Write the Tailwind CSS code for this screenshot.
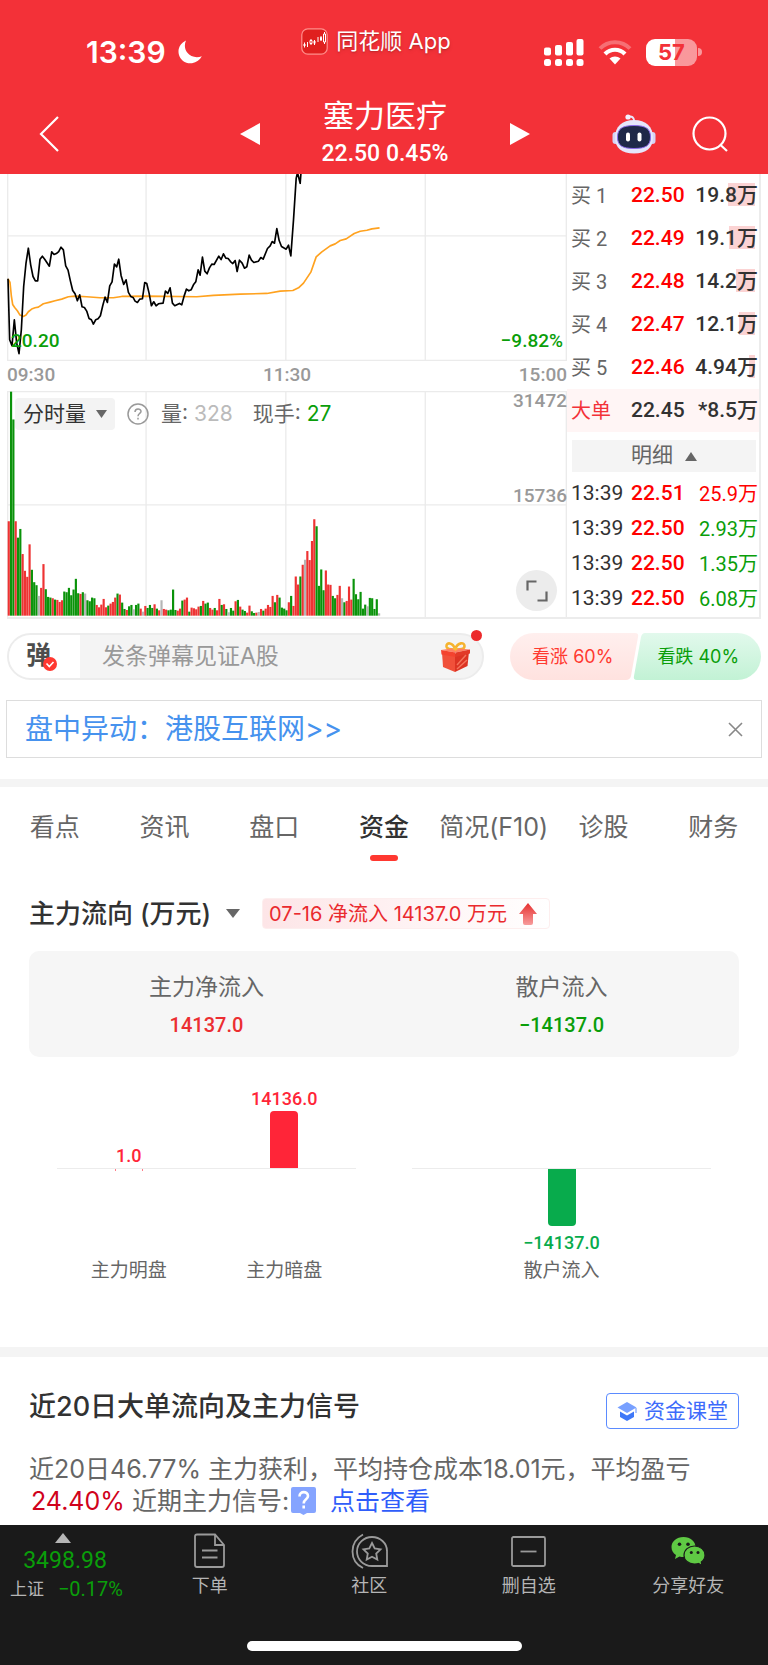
<!DOCTYPE html>
<html lang="zh-CN">
<head>
  <meta charset="UTF-8">
  <meta name="viewport" content="width=device-width, initial-scale=1.0">
  <title>塞力医疗 - 同花顺</title>
  <script src="https://cdn.jsdelivr.net/npm/@tailwindcss/browser@4"></script>
  <style>
    body { font-family: 'Inter', 'Noto Sans CJK SC', sans-serif; }
    .num { font-family: 'Roboto', 'Noto Sans CJK SC', sans-serif; }
    .sans { font-family: 'Inter', 'Noto Sans CJK SC', sans-serif; }
  </style>
</head>
<body class="bg-white text-[#323232] min-h-screen flex flex-col">
  <!-- Header -->
  <header class="bg-[#f33138] text-white pt-6">
    <div class="grid grid-cols-3 h-14">
      <div class="flex items-center gap-3 pl-[86px] text-[30px] leading-none font-semibold">
        <span>13:39</span>
        <svg class="w-6 h-6" viewBox="0 0 24 24" fill="#fff"><path d="M8 0.5C2.500 3 -0.500 8.500 0.800 14.200C2.200 20.300 8 24 14 23.200C18.500 22.600 22 20 23.800 16.300C18.500 18.300 12.500 17 9.200 12.600C6.500 9 6.200 4.500 8 0.500Z"/></svg>
      </div>
      <div class="flex items-center justify-center gap-2 h-[34px] text-[22px] leading-none pr-4">
        <svg class="w-[27px] h-[27px]" viewBox="0 0 27 27">
          <rect x="0.800" y="0.800" width="25.400" height="25.400" rx="6" fill="#e0201f" stroke="#ff8f8c" stroke-width="1.200"/>
          <g stroke="#fff" stroke-width="1" fill="none">
            <path d="M3.500 14.500v5M6.500 14v5M10 11v6M13.500 12v5M17 9v5M20 8v5M23.500 4v12"/>
            <path d="M3 16h1v2h-1zM13 13h1v2.500h-1zM19.500 9.500h1v2.500h-1z" fill="#fff"/>
            <path d="M22.500 6h2v8h-2zM9 12.500h2v3h-2z" fill="#e0201f"/>
          </g>
        </svg>
        <span class="whitespace-nowrap text-shadow-md">同花顺 App</span>
      </div>
      <div class="flex items-center justify-end gap-[14px] pr-[66px]">
        <svg class="w-10 h-[27px]" viewBox="0 0 40 27" fill="#fff">
          <rect x="0" y="8.500" width="7" height="8" rx="2"/><rect x="11" y="6" width="7" height="10.500" rx="2"/><rect x="22" y="3" width="7" height="13.500" rx="2"/><rect x="32.500" y="0" width="7" height="16.500" rx="2"/>
          <rect x="0" y="20" width="7" height="7" rx="2.500"/><rect x="11" y="20" width="7" height="7" rx="2.500"/><rect x="22" y="20" width="7" height="7" rx="2.500"/><rect x="32.500" y="20" width="7" height="7" rx="2.500"/>
        </svg>
        <svg class="w-[34px] h-[26px]" viewBox="0 0 34 26">
          <path d="M2 9.500C10 1 24 1 32 9.500" fill="none" stroke="#fff" stroke-opacity=".3" stroke-width="4"/>
          <path d="M7 15C12.500 9.300 21.500 9.300 27 15" fill="none" stroke="#fff" stroke-width="4.200"/>
          <path d="M11.500 19.500C14.500 16.800 19.500 16.800 22.500 19.500L17 25.500Z" fill="#fff"/>
        </svg>
        <div class="flex items-center gap-px">
          <span class="w-[51px] h-[27px] rounded-[9px] bg-linear-to-r from-white from-57% to-white/50 to-57% text-[#f33138] text-[22px] leading-[27px] font-bold text-center">57</span>
          <span class="w-1 h-2 rounded-r-full bg-white/50"></span>
        </div>
      </div>
    </div>
    <nav class="grid grid-cols-[1fr_292px_1fr] items-center pt-4 pb-[2px]">
      <a href="#" aria-label="返回" class="pl-[39px]">
        <svg class="w-5 h-9" viewBox="0 0 20 36" fill="none" stroke="#fff" stroke-width="2.200"><path d="M19 1L2 18L19 35"/></svg>
      </a>
      <div class="flex items-center justify-between pl-[2px]">
        <button type="button" aria-label="上一只"><svg class="w-5 h-[22px]" viewBox="0 0 20 22" fill="#fff"><path d="M20 0V22L0 11Z"/></svg></button>
        <div class="text-center">
          <h1 class="text-[31px] leading-10">塞力医疗</h1>
          <p class="num text-[23px] leading-9 font-medium">22.50 0.45%</p>
        </div>
        <button type="button" aria-label="下一只"><svg class="w-5 h-[22px]" viewBox="0 0 20 22" fill="#fff"><path d="M0 0V22L20 11Z"/></svg></button>
      </div>
      <div class="flex items-center justify-end gap-9 pr-10">
        <button type="button" aria-label="智能助手">
          <svg class="w-11 h-10" viewBox="0 0 44 40">
            <path d="M15 3C20 1.500 22 3 22.500 8" fill="none" stroke="#e9e6fa" stroke-width="2"/>
            <circle cx="16" cy="3" r="2.600" fill="#f3f1ff"/>
            <rect x="0.500" y="18" width="6" height="12" rx="3" fill="#d5d3f5"/><rect x="37.500" y="18" width="6" height="12" rx="3" fill="#d5d3f5"/>
            <path d="M22 6C34 6 41 13 41 23.500C41 34 34 39.500 22 39.500C10 39.500 3 34 3 23.500C3 13 10 6 22 6Z" fill="#e6e6fb"/>
            <path d="M22 11.500C34 11.500 38.500 15 38.500 23C38.500 31.500 34 34.500 22 34.500C10 34.500 5.500 31.500 5.500 23C5.500 15 10 11.500 22 11.500Z" fill="#1f2848" stroke="#8b6bea" stroke-width="1"/>
            <rect x="14" y="18.500" width="4" height="9" rx="2" fill="#fff"/><rect x="25.500" y="18.500" width="4" height="9" rx="2" fill="#fff"/>
          </svg>
        </button>
        <button type="button" aria-label="搜索">
          <svg class="w-9 h-9" viewBox="0 0 36 36" fill="none" stroke="#fff" stroke-width="2.200"><circle cx="17.500" cy="17.500" r="16"/><path d="M28 28.500L35 35"/></svg>
        </button>
      </div>
    </nav>
  </header>

  <main class="flex-1">
    <!-- Charts and order book -->
    <section class="flex mx-[7px] border-b-2 border-[#ececec]">
      <div class="flex-1 min-w-0 num text-[19px] text-[#999]">
        <div class="relative">
          <svg class="block w-full h-[187px]" viewBox="21 12 1679 562" preserveAspectRatio="none" fill="none">
            <g stroke="#ebebeb" stroke-width="4">
              <path d="M23 12V574M438 12V574M857 12V574M1275 12V574M1698 12V574M21 198H1700M21 572H1700"/>
            </g>
            <path stroke="#ffa21f" stroke-width="5" stroke-linejoin="round" d="M24 327L30 338L34 378L38 404L44 413L52 423L60 436L70 440L78 436L85 426L95 418L105 414L115 412L130 402L150 397L165 393L185 388L205 381L225 379L260 381L300 384L340 384L365 380L440 379L590 381L640 377L720 373L800 371L840 364L878 362L895 354L910 340L932 307L948 261L965 246L990 228L1005 222L1020 212L1038 207L1062 191L1080 184L1100 181L1115 177L1138 174"/>
            <path stroke="#000" stroke-width="5" stroke-linejoin="round" d="M24 327L29 510L36 528L43 450L50 520L57 552L64 480L71 350L78 280L85 235L92 285L99 320L106 333L113 333L120 268L127 259L134 268L148 289L155 246L162 254L169 251L176 245L183 232L190 240L197 288L204 301L211 333L218 362L225 372L232 393L239 375L246 411L253 413L260 424L267 446L274 450L280 463L287 450L294 447L301 438L308 408L315 382L322 398L329 348L336 336L343 283L350 291L356 268L363 317L371 344L378 330L385 368L392 380L399 383L405 394L412 398L419 388L427 387L434 338L440 341L447 370L454 408L461 396L468 408L475 402L489 400L496 364L503 371L510 354L517 400L524 408L538 401L545 405L552 379L559 358L566 363L573 360L580 345L587 336L594 300L600 316L607 262L614 304L621 312L628 294L635 283L642 284L656 259L663 269L670 252L677 265L684 266L691 275L698 281L705 272L711 305L718 271L726 280L733 295L740 291L747 256L754 271L761 278L775 274L782 263L789 268L802 236L810 228L816 215L823 220L830 176L837 212L844 230L858 238L865 226L872 258L880 150L888 25L892 8L900 40L903 0"/>
          </svg>
          <div class="absolute inset-x-1 bottom-2 flex justify-between leading-6 text-[#0a9e0a] font-medium">
            <span>20.20</span><span>−9.82%</span>
          </div>
        </div>
        <div class="flex justify-between h-[30px] leading-[28px] font-medium">
          <span>09:30</span><span>11:30</span><span>15:00</span>
        </div>
        <div class="relative">
          <svg id="volume" class="block w-full h-[226px]" viewBox="21 33 1679 675" preserveAspectRatio="none">
            <g fill="none" stroke="#ebebeb" stroke-width="4">
              <path d="M23 33V708M438 33V708M857 33V708M1275 33V708M1698 33V708M21 373H1700"/>
              <path d="M21 34H1700" stroke-width="6"/>
            </g>
          </svg>
          <div class="absolute inset-x-0 top-0 flex items-start pl-2">
            <div class="sans flex items-center pt-[7px] text-[21px] text-[#666] whitespace-nowrap">
              <button type="button" class="flex items-center gap-[10px] h-8 px-2 rounded bg-[#f3f3f3] text-[#323232]">分时量
                <svg class="w-[11px] h-2" viewBox="0 0 11 8" fill="#666"><path d="M0 0H11L5.500 8Z"/></svg>
              </button>
              <svg class="w-[22px] h-[22px] ml-3" viewBox="0 0 22 22" fill="none" stroke="#999" stroke-width="1.500"><circle cx="11" cy="11" r="10"/><path d="M8 9C8 5 14 5 14 8.500C14 10.500 11 10.500 11 13.300M11 14.800V16.500"/></svg>
              <span class="ml-3">量: <span class="text-[#bbb]">328</span></span>
              <span class="ml-5">现手: <span class="text-[#0a9e0a]">27</span></span>
            </div>
            <span class="ml-auto leading-5 font-medium">31472</span>
          </div>
          <span class="absolute right-0 top-[93px] leading-6 font-medium">15736</span>
          <button type="button" aria-label="全屏" class="absolute right-[10px] bottom-[6px] w-[41px] h-[41px] rounded-full bg-[#ececec] flex items-center justify-center">
            <svg class="w-[22px] h-[22px]" viewBox="0 0 22 22" fill="none" stroke="#666" stroke-width="2.200"><path d="M1.500 10.500V1.500H10.500M20.500 11.500V20.500H11.500"/></svg>
          </button>
        </div>
      </div>

      <div class="w-[194px] num text-[21px] border-r-2 border-[#ececec] flex flex-col">
        <table class="w-full">
          <tbody>
            <tr class="h-[43px]"><td class="pl-1 text-[20px] text-[#666]">买 1</td><td class="w-[54px] text-[#f00] font-medium">22.50</td><td class="w-[74px] pr-px text-right"><span class="relative font-medium"><span class="absolute right-[3px] top-0 h-[23px] w-[27px] bg-[#fbd3d3] -z-10"></span>19.8万</span></td></tr>
            <tr class="h-[43px]"><td class="pl-1 text-[20px] text-[#666]">买 2</td><td class="text-[#f00] font-medium">22.49</td><td class="pr-px text-right"><span class="relative font-medium"><span class="absolute right-[3px] top-0 h-[23px] w-[26px] bg-[#fbd3d3] -z-10"></span>19.1万</span></td></tr>
            <tr class="h-[43px]"><td class="pl-1 text-[20px] text-[#666]">买 3</td><td class="text-[#f00] font-medium">22.48</td><td class="pr-px text-right"><span class="relative font-medium"><span class="absolute right-[3px] top-0 h-[23px] w-[19px] bg-[#fbd3d3] -z-10"></span>14.2万</span></td></tr>
            <tr class="h-[43px]"><td class="pl-1 text-[20px] text-[#666]">买 4</td><td class="text-[#f00] font-medium">22.47</td><td class="pr-px text-right"><span class="relative font-medium"><span class="absolute right-[3px] top-0 h-[23px] w-[16px] bg-[#fbd3d3] -z-10"></span>12.1万</span></td></tr>
            <tr class="h-[43px]"><td class="pl-1 text-[20px] text-[#666]">买 5</td><td class="text-[#f00] font-medium">22.46</td><td class="pr-px text-right"><span class="relative font-medium"><span class="absolute right-[3px] top-0 h-[23px] w-[6px] bg-[#fbd3d3] -z-10"></span>4.94万</span></td></tr>
            <tr class="h-[43px] bg-[#fff5f5]"><td class="pl-1 text-[20px] text-[#f33138] whitespace-nowrap">大单</td><td class="font-medium">22.45</td><td class="pr-px text-right font-medium">*8.5万</td></tr>
          </tbody>
        </table>
        <button type="button" class="flex items-center justify-center gap-3 h-8 mt-2 mb-1 ml-[5px] mr-[3px] bg-[#f4f4f4] text-[#666]">明细
          <svg class="w-3 h-[9px]" viewBox="0 0 12 9" fill="#666"><path d="M6 0L12 9H0Z"/></svg>
        </button>
        <table class="w-full">
          <tbody>
            <tr class="h-[35px]"><td class="pl-1">13:39</td><td class="w-[54px] text-[#f00] font-medium">22.51</td><td class="w-[74px] pr-px text-right text-[20px] text-[#f00]">25.9万</td></tr>
            <tr class="h-[35px]"><td class="pl-1">13:39</td><td class="text-[#f00] font-medium">22.50</td><td class="pr-px text-right text-[20px] text-[#0a9e0a]">2.93万</td></tr>
            <tr class="h-[35px]"><td class="pl-1">13:39</td><td class="text-[#f00] font-medium">22.50</td><td class="pr-px text-right text-[20px] text-[#0a9e0a]">1.35万</td></tr>
            <tr class="h-[35px]"><td class="pl-1">13:39</td><td class="text-[#f00] font-medium">22.50</td><td class="pr-px text-right text-[20px] text-[#0a9e0a]">6.08万</td></tr>
          </tbody>
        </table>
      </div>
    </section>

    <!-- Bullet comments and vote -->
    <section class="flex items-center gap-[26px] mx-[7px] mt-[14px]">
      <div class="relative flex-1 min-w-0 flex h-[47px] rounded-full border-2 border-[#ececec] bg-[#f4f4f4]">
        <label for="danmu" class="relative w-[71px] rounded-l-full bg-white pl-[17px] text-[25px] leading-[40px] font-bold text-[#4d4d4d]">弹
          <svg class="absolute left-[34px] top-[22px] w-[14px] h-[14px]" viewBox="0 0 14 14"><circle cx="7" cy="7" r="7" fill="#ff3830"/><path d="M3.500 6.500L6.300 9.500L10.500 5" fill="none" stroke="#fff" stroke-width="1.600"/></svg>
        </label>
        <input id="danmu" type="text" placeholder="发条弹幕见证A股" class="flex-1 min-w-0 pl-[22px] text-[23px] placeholder:text-[#999] focus:outline-none">
        <button type="button" aria-label="礼物" class="mr-[10px]">
          <svg class="w-8 h-8" viewBox="0 0 32 32">
            <path d="M15 8C13 1 6 1 6.500 5.500C7 9 12 8.500 15 8.500C19 8.500 24.500 9 24.500 5C24.500 1 18 1 15 8Z" fill="none" stroke="#f5b32e" stroke-width="2.600"/>
            <path d="M2 11L15 13V31L3 26Z" fill="#f0503a"/><path d="M15 13L29 10.500L27.500 25L15 31Z" fill="#dc3323"/>
            <path d="M1 9L14 7L30 8.500L15.500 11.500Z" fill="#ff8263"/><path d="M1 9L15.500 11.500V16L1.500 13.500Z" fill="#f4432f"/><path d="M15.500 11.500L30 8.500V12.500L15.500 16Z" fill="#e23a29"/>
            <path d="M17 24L26 14M17 28L27 19" stroke="#f4745c" stroke-width="1.500"/>
            <path d="M12 7.500L15.500 6L18.500 7.500L15.500 10Z" fill="#f8bc38"/>
          </svg>
        </button>
        <span class="absolute right-0 -top-[5px] w-[11px] h-[11px] rounded-full bg-[#ec2a2c]"></span>
      </div>
      <div class="relative shrink-0 flex w-[251px] h-[47px] text-[18px] rounded-full overflow-hidden">
        <svg class="absolute inset-0 w-full h-full" viewBox="0 0 251 47" preserveAspectRatio="none">
          <defs>
            <linearGradient id="up" x1="0" y1="0" x2="0" y2="1"><stop offset="0" stop-color="#ffefee"/><stop offset="1" stop-color="#ffe2df"/></linearGradient>
            <linearGradient id="down" x1="0" y1="0" x2="0" y2="1"><stop offset="0" stop-color="#e2f9ec"/><stop offset="1" stop-color="#c2f2d5"/></linearGradient>
          </defs>
          <path d="M0 0H125Q129 0 128 4L121 43Q120 47 116 47H0Z" fill="url(#up)"/>
          <path d="M135 0H251V47H127Q123 47 124 43L131 4Q132 0 135 0Z" fill="url(#down)"/>
        </svg>
        <button type="button" class="relative flex-1 text-[#ff3a30]">看涨 60%</button>
        <button type="button" class="relative flex-1 text-[#0a9e0a]">看跌 40%</button>
      </div>
    </section>

    <!-- Notice -->
    <section class="flex items-center justify-between mx-[6px] mt-[20px] px-[18px] h-[58px] border border-[#ddd]">
      <a href="#" class="text-[28px] leading-none text-[#4692ee]">盘中异动：港股互联网&gt;&gt;</a>
      <button type="button" aria-label="关闭"><svg class="w-[15px] h-[15px]" viewBox="0 0 15 15" stroke="#888" stroke-width="1.600"><path d="M1 1L14 14M14 1L1 14"/></svg></button>
    </section>

    <div class="h-2 bg-[#f4f4f4] mt-[21px]"></div>

    <!-- Tabs -->
    <nav class="grid grid-cols-7 pt-5 text-[25px] leading-10 text-center text-[#666] whitespace-nowrap">
      <a href="#" class="h-[54px]">看点</a>
      <a href="#">资讯</a>
      <a href="#">盘口</a>
      <a href="#" class="flex flex-col items-center justify-between font-medium text-[#323232]">资金<span class="w-7 h-[6px] rounded-full bg-[#ff3830]"></span></a>
      <a href="#" class="flex justify-center">简况(F10)</a>
      <a href="#">诊股</a>
      <a href="#">财务</a>
    </nav>

    <!-- Capital flow -->
    <section class="px-[29px] pt-[36px] pb-[60px]">
      <div class="flex items-center h-[33px]">
        <h2 class="text-[26px] leading-none font-medium">主力流向 (万元)</h2>
        <svg class="w-[14px] h-[9px] ml-[15px]" viewBox="0 0 14 9" fill="#666"><path d="M0 0H14L7 9Z"/></svg>
        <div class="flex items-center gap-3 ml-[22px] h-[31px] pl-[6px] pr-3 rounded border border-[#fdeeee] bg-linear-to-r from-[#fde5e7] to-white text-[20px] text-[#ea2a2e] whitespace-nowrap">
          <span>07-16 净流入 14137.0 万元</span>
          <svg class="w-[18px] h-[22px]" viewBox="0 0 18 22">
            <defs><linearGradient id="arrow" x1="0" y1="0" x2="0" y2="1"><stop offset="0" stop-color="#e6302f"/><stop offset="1" stop-color="#f79c9c"/></linearGradient></defs>
            <path d="M9 0L18 11H14V20Q14 22 12 22H6Q4 22 4 20V11H0Z" fill="url(#arrow)"/>
          </svg>
        </div>
      </div>
      <dl class="grid grid-cols-2 mt-[21px] pt-[18px] pb-3 rounded-[10px] bg-[#f6f6f6] text-center">
        <div>
          <dt class="text-[23px] leading-9 text-[#666]">主力净流入</dt>
          <dd class="num text-[20px] leading-10 font-medium text-[#ec2e31]">14137.0</dd>
        </div>
        <div>
          <dt class="text-[23px] leading-9 text-[#666]">散户流入</dt>
          <dd class="num text-[20px] leading-10 font-medium text-[#0a9e0a]">−14137.0</dd>
        </div>
      </dl>
      <div class="grid grid-cols-2 mt-7 text-center">
        <div class="px-[22px]">
          <div class="num grid grid-cols-2 h-[83px] items-end text-[18px] leading-6 font-medium text-[#ff2538]">
            <span>1.0</span>
            <div class="flex flex-col items-center"><span>14136.0</span><span class="w-7 h-[57px] rounded-t bg-[#ff2538]"></span></div>
          </div>
          <div class="h-px mx-[6px] bg-[#ececec]"></div>
          <div class="grid grid-cols-2 text-[19px] leading-8 text-[#666]">
            <div class="flex flex-col items-center"><span class="w-7 h-[2px] border-x border-[#ff2538]/60"></span><span class="mt-[84px]">主力明盘</span></div>
            <div class="mt-[86px]">主力暗盘</div>
          </div>
        </div>
        <div class="px-[28px]">
          <div class="h-[83px]"></div>
          <div class="h-px bg-[#ececec]"></div>
          <div class="flex flex-col items-center">
            <span class="w-7 h-[57px] rounded-b bg-[#08ab4c]"></span>
            <span class="num mt-[5px] text-[18px] leading-6 font-medium text-[#08ab4c]">−14137.0</span>
            <span class="text-[19px] leading-8 text-[#666]">散户流入</span>
          </div>
        </div>
      </div>
    </section>

    <div class="h-[10px] bg-[#f4f4f4]"></div>

    <!-- Large orders over 20 days -->
    <section class="px-[29px] pt-8">
      <div class="flex items-start justify-between">
        <h2 class="text-[27px] leading-9 font-medium">近20日大单流向及主力信号</h2>
        <a href="#" class="flex items-center gap-[7px] h-9 mt-1 px-[10px] rounded border border-[#5b8bff] text-[21px] text-[#3d6bfb] whitespace-nowrap">
          <svg class="w-5 h-[19px]" viewBox="0 0 20 19">
            <path d="M10 0L19.500 5.500L10 11L0.500 5.500Z" fill="#78a0ff"/>
            <path d="M3 9.500L10 13.500L17 9.500V15L10 19L3 15Z" fill="#3f78f8"/><path d="M19 6V11" stroke="#78a0ff" stroke-width="1.200"/>
          </svg>资金课堂
        </a>
      </div>
      <p class="mt-6 pb-1 text-[25px] leading-8 text-[#666]">近20日46.77% 主力获利，平均持仓成本18.01元，平均盈亏<br>
        <span class="inline-flex items-center whitespace-pre"><span class="pl-[2px] text-[#d0021b]">24.40%</span> 近期主力信号:<svg class="w-[25px] h-7 ml-[2px] mr-[14px]" viewBox="0 0 25 28"><path d="M2 0H23Q25 0 25 2V24Q25 26 23 26H16L12.500 28L9 26H2Q0 26 0 24V2Q0 0 2 0Z" fill="#85a4ff"/><path d="M8.500 9.500C8.500 3.500 17 4 17 9C17 12.500 12.700 12 12.700 16.500M12.700 18.500V21.500" fill="none" stroke="#fff" stroke-width="2.600"/></svg><a href="#" class="text-[#2f5dfa]">点击查看</a></span>
      </p>
    </section>
  </main>

  <!-- Bottom bar -->
  <footer class="bg-[#1a1a1a] text-[#b5b5b5] text-[18px]">
    <div class="flex h-[116px] pt-2 leading-6 text-center">
      <div class="w-[130px] num text-[#0a9e0a]">
        <svg class="w-4 h-[10px] ml-[55px]" viewBox="0 0 16 10" fill="#b5b5b5"><path d="M8 0L16 10H0Z"/></svg>
        <p class="text-[23px] leading-9">3498.98</p>
        <p class="flex justify-between text-[20px] leading-5 pl-[10px] pr-[7px]"><span class="text-[17px] text-[#b5b5b5]">上证</span>−0.17%</p>
      </div>
      <nav class="flex-1 grid grid-cols-4">
        <a href="#" class="flex flex-col items-center gap-[5px]">
          <svg class="w-8 h-[36px]" viewBox="0 0 32 36" fill="none" stroke="#9a9a9a" stroke-width="1.800"><path d="M3 1.500H21L30 12V32Q30 34 28 34H3Q1 34 1 32V3.500Q1 1.500 3 1.500ZM21 1.500V12H30M8 17.500H23.500M8 24.500H23.500"/></svg>下单
        </a>
        <a href="#" class="flex flex-col items-center gap-[5px]">
          <svg class="w-[37px] h-[36px]" viewBox="0 0 37 36" fill="none" stroke="#9a9a9a" stroke-width="1.800"><path d="M36 33H21C12 33 6 26 6 18.500C6 10 13 4 21 4C29 4 36 10 36 18ZM36 17V33M12 1.500C-2 9 -2 28 12 35"/><path d="M21 10L23.700 15.500L29.500 16.300L25.200 20.500L26.300 26.500L21 23.700L15.700 26.500L16.800 20.500L12.500 16.300L18.300 15.500Z"/></svg>社区
        </a>
        <a href="#" class="flex flex-col items-center gap-[5px]">
          <svg class="w-[35px] h-[36px]" viewBox="0 0 35 36" fill="none" stroke="#9a9a9a" stroke-width="1.800"><rect x="1" y="4" width="33" height="29" rx="1.500"/><path d="M9.500 18.500H25.500"/></svg>删自选
        </a>
        <a href="#" class="flex flex-col items-center gap-[5px]">
          <svg class="w-[34px] h-[36px]" viewBox="0 0 34 36">
            <path d="M12.500 4C5.500 4 0.500 8.500 0.500 14C0.500 17.500 2 20 5 22L4 26L8.500 23.500C10 24 11 24 12.500 24C20 24 24.500 19.500 24.500 14C24.500 8.500 19.500 4 12.500 4Z" fill="#5fc944"/>
            <path d="M23.500 13C17.500 13 13 17 13 22.200C13 27.500 17.500 31 23.500 31C25 31 26 31 27.500 30.500L31 32.500L30.300 29C32.500 27.300 34 25 34 22.200C34 17 29.500 13 23.500 13Z" fill="#5fc944" stroke="#1a1a1a" stroke-width="1.200"/>
            <circle cx="8.500" cy="11.300" r="1.800" fill="#1a1a1a"/><circle cx="17" cy="11.300" r="1.800" fill="#1a1a1a"/><circle cx="20.300" cy="19.500" r="1.500" fill="#1a1a1a"/><circle cx="27" cy="19.500" r="1.500" fill="#1a1a1a"/>
          </svg>分享好友
        </a>
      </nav>
    </div>
    <div class="w-[275px] h-[10px] mx-auto mb-[14px] rounded-full bg-white"></div>
  </footer>

  <script>
    // Minute volume: colour letter (r up, g down, n flat) followed by the height
    const volumes = 'r282 g669 g586 r282 g233 g259 r184 r134 r116 r213 g137 g100 g91 n59 r83 r154 g79 g56 g54 r52 g48 r47 r41 r46 g72 g70 g83 g61 g78 g110 g67 r65 g70 n66 g46 g43 g54 g52 r32 r25 r33 r50 r25 g30 r36 r41 r54 g66 r63 g39 g20 r17 g28 g32 n19 g32 g36 r21 n12 r29 g23 g32 g23 r34 g21 r16 n46 r20 r18 g16 g18 g78 g17 r15 r21 g45 r48 r54 g12 r24 r22 r19 r27 g29 r44 g36 g39 r23 r18 g23 r16 r50 g32 r34 g20 n10 g23 g15 r43 g47 r27 g18 g14 r9 r30 g13 g8 r9 n11 r20 g15 r21 r32 r26 r59 g40 r62 g54 g24 g21 g16 r40 g59 r29 r117 r93 g117 r152 n167 r193 r166 r223 r288 g267 g89 g138 g76 r135 r93 r92 g59 g52 r62 r89 n52 g40 r44 r87 r48 g110 g64 g49 g71 g21 g33 n28 g53 g52 g20 g49 n7';
    const colors = { r: '#ee3333', g: '#0a930a', n: '#b5b5b5' };
    const svg = document.getElementById('volume');
    volumes.split(' ').forEach((item, i) => {
      const h = Number(item.slice(1));
      const rect = document.createElementNS('http://www.w3.org/2000/svg', 'rect');
      rect.setAttribute('x', 23 + i * 6.94);
      rect.setAttribute('y', 704 - h);
      rect.setAttribute('width', 6.5);
      rect.setAttribute('height', h);
      rect.setAttribute('fill', colors[item[0]]);
      svg.appendChild(rect);
    });
  </script>
</body>
</html>
